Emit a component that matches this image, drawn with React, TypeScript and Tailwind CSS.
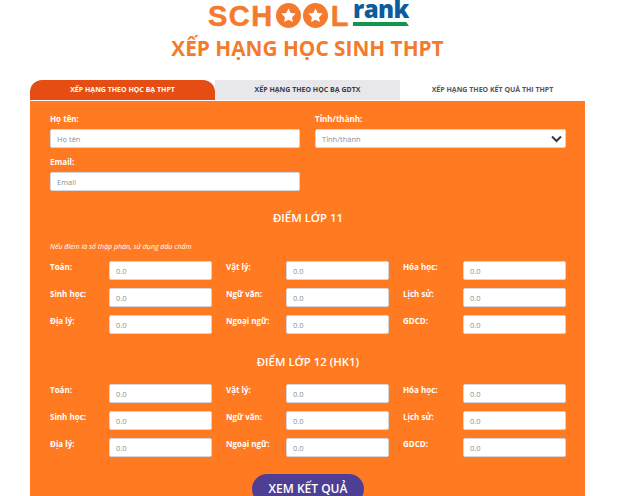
const labelClass = "text-[8px] font-bold leading-[10px] text-white";
const inputClass =
  "h-[19px] rounded-[2px] border border-[#d5d5dc] bg-white px-[6px] text-[7.5px] leading-[18px] text-[#8a8f94]";

const subjectsRows = [
  ["Toán:", "Vật lý:", "Hóa học:"],
  ["Sinh học:", "Ngữ văn:", "Lịch sử:"],
  ["Địa lý:", "Ngoại ngữ:", "GDCD:"],
];

function LogoO() {
  return (
    <svg width="25" height="25" viewBox="0 0 24 24" className="shrink-0">
      <circle cx="12" cy="12" r="12" fill="#f47b2e" />
      <path
        d="M12 5.2l2.1 4.3 4.8.7-3.5 3.4.8 4.7-4.2-2.2-4.2 2.2.8-4.7-3.5-3.4 4.8-.7z"
        fill="#fff"
      />
    </svg>
  );
}

function Logo() {
  return (
    <div className="flex h-[32px] items-start pl-[208px]">
      <div className="flex h-[32px] items-start gap-[2px] font-['Liberation_Sans',sans-serif] text-[29px] leading-[33px] font-bold tracking-[1.5px] text-[#f47b2e] [-webkit-text-stroke:0.5px_#f47b2e]">
        <span>SCH</span>
        <span className="mt-[3px] flex gap-[2px]">
          <LogoO />
          <LogoO />
        </span>
        <span className="ml-[1px]">L</span>
      </div>
      <div className="ml-[3px] flex w-[56px] flex-col">
        <span className="h-[22px] text-center text-[24px] leading-[18px] font-extrabold tracking-[-0.6px] text-[#0c5c9e]">
          rank
        </span>
        <span className="h-[4px] bg-[#12964f] [clip-path:polygon(0_0,95%_0,100%_100%,0_100%)]" />
      </div>
    </div>
  );
}

function Tab({ label, className }: { label: string; className: string }) {
  return (
    <div
      className={`flex h-[20px] w-[185px] items-center justify-center text-[7px] font-bold ${className}`}
    >
      {label}
    </div>
  );
}

function ScoreGrid() {
  return (
    <div className="flex flex-col gap-[8px]">
      {subjectsRows.map((row) => (
        <div key={row[0]} className="flex gap-x-[14px]">
          {row.map((label, i) => (
            <div
              key={label}
              className={i === 0 ? "grid grid-cols-[59px_103px]" : "grid grid-cols-[60px_103px]"}
            >
              <span className={`${labelClass} pt-[1px]`}>{label}</span>
              <div className={inputClass}>0.0</div>
            </div>
          ))}
        </div>
      ))}
    </div>
  );
}

export default function App() {
  return (
    <div className="h-[496px] w-[624px] overflow-hidden bg-white font-['Open_Sans',sans-serif]">
      <Logo />
      <h1 className="mt-[2px] w-[615px] text-center text-[20.8px] leading-[28px] font-bold text-[#f47b2e]">
        XẾP HẠNG HỌC SINH THPT
      </h1>
      <div className="mx-[30px] mt-[18px] w-[555px]">
        <div className="flex border-b border-white">
          <Tab
            label="XẾP HẠNG THEO HỌC BẠ THPT"
            className="rounded-t-[12px] bg-[#e64d12] text-white"
          />
          <Tab label="XẾP HẠNG THEO HỌC BẠ GDTX" className="bg-[#e8e8ec] text-[#3c3c46]" />
          <Tab label="XẾP HẠNG THEO KẾT QUẢ THI THPT" className="bg-white text-[#55555f]" />
        </div>
        <div className="h-[400px] bg-[#ff7a21] px-[20px] pt-[13px]">
          <div className="grid w-[516px] grid-cols-[250px_251px] gap-x-[15px]">
            <div className="flex flex-col gap-[5px]">
              <span className={labelClass}>Họ tên:</span>
              <div className={inputClass}>Họ tên</div>
            </div>
            <div className="flex flex-col gap-[5px]">
              <span className={labelClass}>Tỉnh/thành:</span>
              <div className={`${inputClass} flex items-center justify-between pr-[3px]`}>
                <span className="pt-[1px]">Tỉnh/thành</span>
                <svg width="11" height="8" viewBox="0 0 11 8" fill="none">
                  <path d="M1 1.5l4.5 4.5L10 1.5" stroke="#343a40" strokeWidth="2" />
                </svg>
              </div>
            </div>
            <div className="mt-[9px] flex flex-col gap-[5px]">
              <span className={labelClass}>Email:</span>
              <div className={inputClass}>Email</div>
            </div>
          </div>
          <h2 className="mt-[18px] w-[516px] text-center text-[11.4px] leading-[18px] font-semibold text-white">
            ĐIỂM LỚP 11
          </h2>
          <p className="mt-[15px] text-[7px] leading-[10px] text-white italic">
            Nếu điểm là số thập phân, sử dụng dấu chấm
          </p>
          <div className="mt-[9px]">
            <ScoreGrid />
          </div>
          <h2 className="mt-[19px] w-[516px] text-center text-[11.4px] leading-[18px] font-semibold text-white">
            ĐIỂM LỚP 12 (HK1)
          </h2>
          <div className="mt-[13px]">
            <ScoreGrid />
          </div>
          <button className="mt-[17px] ml-[202px] block h-[30px] w-[112px] rounded-full bg-[#4e3f94] text-[12px] font-semibold text-white">
            XEM KẾT QUẢ
          </button>
        </div>
      </div>
    </div>
  );
}
